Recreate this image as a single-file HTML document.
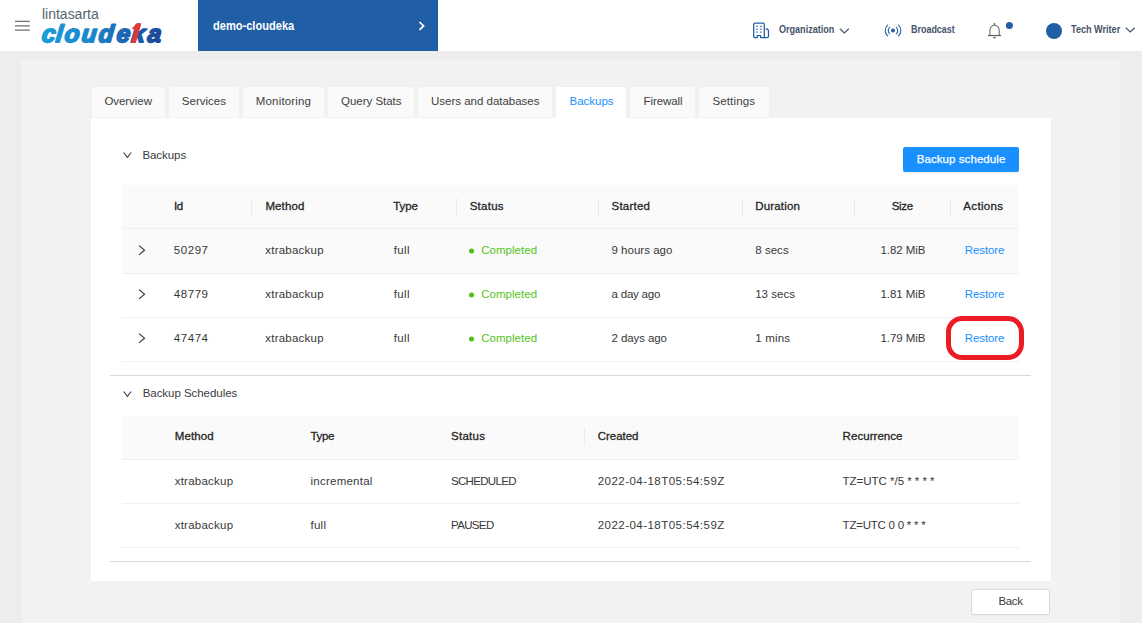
<!DOCTYPE html>
<html lang="en">
<head>
<meta charset="utf-8">
<title>Backups - demo-cloudeka</title>
<style>
*{box-sizing:border-box;margin:0;padding:0}
html,body{width:1142px;height:623px;overflow:hidden}
body{background:#ededed;font-family:"Liberation Sans",sans-serif;position:relative}
.abs,.t{position:absolute}
.t{white-space:pre;line-height:1;transform-origin:0 50%}
#hdr{left:0;top:0;width:1142px;height:51px;background:#fff}
#inner{left:21px;top:60px;width:1099px;height:563px;background:#f2f2f2}
#proj{left:198px;top:0;width:240px;height:51px;background:#205ea6}
.tab{top:87px;height:30px;background:#fafafa;box-shadow:0 0 0 1px #f0f0f0}
.tab.act{background:#fff;height:31px;box-shadow:-1px -1px 0 #f0f0f0,1px -1px 0 #f0f0f0}
#card{left:91px;top:118px;width:960px;height:463px;background:#fff}
.th{background:#fafafa}
.hl{height:1px;background:#f0f0f0}
.vd{width:1px;height:18px;background:#ebebeb}
.dv{height:1px;background:#d9d9d9}
#bs{left:903px;top:147px;width:116px;height:25px;background:#1890ff;border-radius:2px;box-shadow:0 2px 0 rgba(0,0,0,.045)}
#back{left:971px;top:589px;width:79px;height:26px;box-shadow:0 2px 0 rgba(0,0,0,.015);background:#fff;border:1px solid #d9d9d9;border-radius:2px}
.dot{width:6px;height:6px;border-radius:50%;background:#52c41a}
svg{position:absolute;overflow:visible}
</style>
</head>
<body>
<div class="abs" id="hdr"></div>
<div class="abs" id="inner"></div>
<div class="abs" id="proj"></div>

<!-- hamburger -->
<svg style="left:0;top:0" width="60" height="51" viewBox="0 0 60 51"><path d="M15 21.4 H29.8 M15 25.9 H29.8 M15 30.2 H29.8" fill="none" stroke="#707070" stroke-width="1.3"/></svg>
<svg style="left:0;top:0" width="200" height="51" viewBox="0 0 200 51">
<defs><linearGradient id="lg" gradientUnits="userSpaceOnUse" x1="42.0" y1="0" x2="162.0" y2="0"><stop offset="0" stop-color="#1b9cd8"/><stop offset="0.4" stop-color="#1b86cc"/><stop offset="0.7" stop-color="#1c65b2"/><stop offset="1" stop-color="#1d4796"/></linearGradient></defs>
<text id="logo" transform="translate(0 41.7) skewX(-6) scale(1.0 1)" x="41.30 55.20 64.00 81.00 98.00 116.00 130.80 146.90" y="0" font-family="Liberation Sans, sans-serif" font-size="24.4" font-weight="bold" font-style="italic" fill="url(#lg)" stroke="url(#lg)" stroke-width="1.8" stroke-linejoin="round">cloudeka</text>
<path d="M137.1 23.2 H141.2 L135.8 43 H131.1 L135.3 29 L132.2 29.2 L131.9 28.4 Z" fill="#e8352e"/>
</svg>

<!-- project chevron -->
<svg style="left:418px;top:21px" width="8" height="10" viewBox="0 0 8 10"><path d="M1.5 1 L5.6 4.9 L1.5 8.8" fill="none" stroke="#fff" stroke-width="1.7"/></svg>

<!-- organization icon -->
<svg style="left:746px;top:16px" width="30" height="28" viewBox="746 16 30 28" fill="none" stroke="#205ea6" stroke-width="1.25" stroke-linecap="round" stroke-linejoin="round">
<path d="M753.7 36.2 V24.4 Q753.7 23.1 755 23.1 H763 Q764.3 23.1 764.3 24.4 V37.3"/>
<path d="M753.7 36.2 Q753.7 37.5 755 37.5 H757.2 V35.6 H760.6 V37.5 H767.2 Q768.5 37.5 768.5 36.2 V31.2 Q768.5 29.2 766.2 28.9"/>
<path d="M756.3 26.3 H757.7 M760.3 26.3 H761.7 M756.3 29.2 H757.7 M760.3 29.2 H761.7 M756.3 32.2 H757.7 M760.3 32.2 H761.7" stroke-linecap="butt" stroke-width="1.2"/>
</svg>
<!-- chevron down org -->
<svg style="left:839px;top:28px" width="11" height="6" viewBox="0 0 11 6"><path d="M0.8 0.8 L5.3 5 L9.8 0.8" fill="none" stroke="#46536a" stroke-width="1.2"/></svg>

<!-- broadcast icon -->
<svg style="left:878px;top:16px" width="30" height="28" viewBox="878 16 30 28" fill="none" stroke="#205ea6" stroke-width="1.1" stroke-linecap="round">
<circle cx="893" cy="30.5" r="2" fill="#205ea6" stroke="none"/>
<path d="M889.6 27.3 A4.5 4.5 0 0 0 889.6 33.7"/>
<path d="M896.4 27.3 A4.5 4.5 0 0 1 896.4 33.7"/>
<path d="M887.7 25.2 A6.9 6.9 0 0 0 887.7 35.8"/>
<path d="M898.4 25.2 A6.9 6.9 0 0 1 898.4 35.8"/>
</svg>

<!-- bell -->
<svg style="left:982px;top:16px" width="36" height="28" viewBox="982 16 36 28" fill="none" stroke="#666" stroke-width="1.05">
<path d="M994.5 23 V25" stroke-width="1.4"/>
<path d="M989.9 35.2 V29.9 A4.65 4.65 0 0 1 999.2 29.9 V35.2"/>
<path d="M988.1 35.55 H1001.1" stroke="#5c5c5c" stroke-width="1.2"/>
<path d="M992.9 36.9 H996.1 L994.5 38.9 Z" fill="#666" stroke="none"/>
<circle cx="1009.4" cy="25.4" r="3.5" fill="#205ea6" stroke="none"/>
</svg>
<!-- avatar -->
<div class="abs" style="left:1046.3px;top:22.7px;width:16px;height:16px;border-radius:50%;background:#205ea6"></div>
<svg style="left:1124.6px;top:27.1px" width="11" height="6" viewBox="0 0 11 6"><path d="M0.8 0.8 L5.3 5 L9.8 0.8" fill="none" stroke="#46536a" stroke-width="1.2"/></svg>

<!-- tabs -->
<div class="abs tab" style="left:92px;width:73px"></div>
<div class="abs tab" style="left:169px;width:70px"></div>
<div class="abs tab" style="left:243px;width:81px"></div>
<div class="abs tab" style="left:328px;width:86px"></div>
<div class="abs tab" style="left:418px;width:134px"></div>
<div class="abs tab act" style="left:556px;width:70px"></div>
<div class="abs tab" style="left:630px;width:65px"></div>
<div class="abs tab" style="left:699px;width:70px"></div>

<div class="abs" id="card"></div>

<!-- collapse arrows -->
<svg style="left:122.5px;top:152px" width="9" height="6" viewBox="0 0 9 6"><path d="M0.6 0.5 L4.4 5.3 L8.2 0.5" fill="none" stroke="#333" stroke-width="1.05"/></svg>
<svg style="left:122.5px;top:390.5px" width="9" height="6" viewBox="0 0 9 6"><path d="M0.6 0.5 L4.4 5.3 L8.2 0.5" fill="none" stroke="#333" stroke-width="1.05"/></svg>

<div class="abs" id="bs"></div>

<!-- table 1 -->
<div class="abs th" style="left:122px;top:185px;width:897px;height:43px"></div>
<div class="abs" style="left:122px;top:229px;width:897px;height:44px;background:#fafafa"></div>
<div class="abs hl" style="left:122px;top:228px;width:897px"></div>
<div class="abs hl" style="left:122px;top:273px;width:897px"></div>
<div class="abs hl" style="left:122px;top:317px;width:897px"></div>
<div class="abs hl" style="left:122px;top:361px;width:897px"></div>
<div class="abs vd" style="left:251px;top:198px"></div>
<div class="abs vd" style="left:456px;top:198px"></div>
<div class="abs vd" style="left:598px;top:198px"></div>
<div class="abs vd" style="left:742px;top:198px"></div>
<div class="abs vd" style="left:854px;top:198px"></div>
<div class="abs vd" style="left:950px;top:198px"></div>

<!-- row expanders -->
<svg style="left:138px;top:245px" width="8" height="11" viewBox="0 0 8 11"><path d="M1 0.6 L6.6 5.2 L1 9.8" fill="none" stroke="#333" stroke-width="1.1"/></svg>
<svg style="left:138px;top:289px" width="8" height="11" viewBox="0 0 8 11"><path d="M1 0.6 L6.6 5.2 L1 9.8" fill="none" stroke="#333" stroke-width="1.1"/></svg>
<svg style="left:138px;top:333px" width="8" height="11" viewBox="0 0 8 11"><path d="M1 0.6 L6.6 5.2 L1 9.8" fill="none" stroke="#333" stroke-width="1.1"/></svg>

<svg style="left:460px;top:240px" width="24" height="110" viewBox="460 240 24 110"><circle cx="471.5" cy="251" r="2.5" fill="#4cc016"/><circle cx="471.5" cy="295" r="2.5" fill="#4cc016"/><circle cx="471.5" cy="339" r="2.5" fill="#4cc016"/></svg>

<!-- highlight -->
<div class="abs" style="left:946px;top:316px;width:78px;height:44px;border:5px solid #ec1c24;border-radius:16px"></div>

<div class="abs dv" style="left:110px;top:375px;width:921px"></div>

<!-- table 2 -->
<div class="abs th" style="left:122px;top:416px;width:897px;height:43px"></div>
<div class="abs hl" style="left:122px;top:459px;width:897px"></div>
<div class="abs hl" style="left:122px;top:503px;width:897px"></div>
<div class="abs hl" style="left:122px;top:547px;width:897px"></div>
<div class="abs vd" style="left:584px;top:428px"></div>
<div class="abs dv" style="left:110px;top:561px;width:921px"></div>

<div class="abs" id="back"></div>

<span class="t" style="left:104.4px;top:96px;font-size:11.5px;color:#404040;letter-spacing:-0.048px;">Overview</span>
<span class="t" style="left:181.8px;top:96px;font-size:11.5px;color:#404040;letter-spacing:0.013px;">Services</span>
<span class="t" style="left:255.8px;top:96px;font-size:11.5px;color:#404040;letter-spacing:0.166px;">Monitoring</span>
<span class="t" style="left:341.0px;top:96px;font-size:11.5px;color:#404040;letter-spacing:-0.022px;">Query Stats</span>
<span class="t" style="left:431.0px;top:96px;font-size:11.5px;color:#404040;letter-spacing:-0.010px;">Users and databases</span>
<span class="t" style="left:643.6px;top:96px;font-size:11.5px;color:#404040;letter-spacing:-0.104px;">Firewall</span>
<span class="t" style="left:712.4px;top:96px;font-size:11.5px;color:#404040;letter-spacing:0.148px;">Settings</span>
<span class="t" style="left:569.6px;top:96px;font-size:11.5px;color:#1890ff;letter-spacing:-0.035px;">Backups</span>
<span class="t" style="left:142.4px;top:150px;font-size:11.5px;color:#3a3a3a;letter-spacing:-0.052px;">Backups</span>
<span class="t" style="left:142.7px;top:388px;font-size:11.5px;color:#3a3a3a;letter-spacing:-0.044px;">Backup Schedules</span>
<span class="t" style="left:916.8px;top:154px;font-size:11.5px;color:#fff;-webkit-text-stroke:0.25px #fff;letter-spacing:0.065px;">Backup schedule</span>
<span class="t" style="left:173.9px;top:201px;font-size:11.5px;color:#262626;-webkit-text-stroke:0.3px #262626;letter-spacing:-0.294px;">Id</span>
<span class="t" style="left:265.4px;top:201px;font-size:11.5px;color:#262626;-webkit-text-stroke:0.3px #262626;letter-spacing:0.108px;">Method</span>
<span class="t" style="left:393.3px;top:201px;font-size:11.5px;color:#262626;-webkit-text-stroke:0.3px #262626;letter-spacing:-0.079px;">Type</span>
<span class="t" style="left:469.7px;top:201px;font-size:11.5px;color:#262626;-webkit-text-stroke:0.3px #262626;letter-spacing:0.258px;">Status</span>
<span class="t" style="left:611.5px;top:201px;font-size:11.5px;color:#262626;-webkit-text-stroke:0.3px #262626;letter-spacing:0.237px;">Started</span>
<span class="t" style="left:755.2px;top:201px;font-size:11.5px;color:#262626;-webkit-text-stroke:0.3px #262626;letter-spacing:0.190px;">Duration</span>
<span class="t" style="left:891.7px;top:201px;font-size:11.5px;color:#262626;-webkit-text-stroke:0.3px #262626;letter-spacing:-0.292px;">Size</span>
<span class="t" style="left:963.3px;top:201px;font-size:11.5px;color:#262626;-webkit-text-stroke:0.3px #262626;letter-spacing:0.330px;">Actions</span>
<span class="t" style="left:173.8px;top:245px;font-size:11.5px;color:#383838;letter-spacing:0.554px;">50297</span>
<span class="t" style="left:265.3px;top:245px;font-size:11.5px;color:#383838;letter-spacing:0.226px;">xtrabackup</span>
<span class="t" style="left:393.7px;top:245px;font-size:11.5px;color:#383838;letter-spacing:0.366px;">full</span>
<span class="t" style="left:481.2px;top:245px;font-size:11.5px;color:#52c41a;letter-spacing:0.034px;">Completed</span>
<span class="t" style="left:611.5px;top:245px;font-size:11.5px;color:#383838;letter-spacing:0.015px;">9 hours ago</span>
<span class="t" style="left:755.2px;top:245px;font-size:11.5px;color:#383838;letter-spacing:0.050px;">8 secs</span>
<span class="t" style="left:880.5px;top:245px;font-size:11.5px;color:#383838;letter-spacing:-0.056px;">1.82 MiB</span>
<span class="t" style="left:964.8px;top:245px;font-size:11.5px;color:#1890ff;letter-spacing:-0.097px;">Restore</span>
<span class="t" style="left:173.8px;top:289px;font-size:11.5px;color:#383838;letter-spacing:0.554px;">48779</span>
<span class="t" style="left:265.3px;top:289px;font-size:11.5px;color:#383838;letter-spacing:0.226px;">xtrabackup</span>
<span class="t" style="left:393.7px;top:289px;font-size:11.5px;color:#383838;letter-spacing:0.366px;">full</span>
<span class="t" style="left:481.2px;top:289px;font-size:11.5px;color:#52c41a;letter-spacing:0.034px;">Completed</span>
<span class="t" style="left:611.5px;top:289px;font-size:11.5px;color:#383838;letter-spacing:-0.202px;">a day ago</span>
<span class="t" style="left:755.2px;top:289px;font-size:11.5px;color:#383838;letter-spacing:0.027px;">13 secs</span>
<span class="t" style="left:880.5px;top:289px;font-size:11.5px;color:#383838;letter-spacing:-0.056px;">1.81 MiB</span>
<span class="t" style="left:964.8px;top:289px;font-size:11.5px;color:#1890ff;letter-spacing:-0.097px;">Restore</span>
<span class="t" style="left:173.8px;top:333px;font-size:11.5px;color:#383838;letter-spacing:0.554px;">47474</span>
<span class="t" style="left:265.3px;top:333px;font-size:11.5px;color:#383838;letter-spacing:0.226px;">xtrabackup</span>
<span class="t" style="left:393.7px;top:333px;font-size:11.5px;color:#383838;letter-spacing:0.366px;">full</span>
<span class="t" style="left:481.2px;top:333px;font-size:11.5px;color:#52c41a;letter-spacing:0.034px;">Completed</span>
<span class="t" style="left:611.5px;top:333px;font-size:11.5px;color:#383838;letter-spacing:-0.085px;">2 days ago</span>
<span class="t" style="left:755.2px;top:333px;font-size:11.5px;color:#383838;letter-spacing:0.185px;">1 mins</span>
<span class="t" style="left:880.5px;top:333px;font-size:11.5px;color:#383838;letter-spacing:-0.056px;">1.79 MiB</span>
<span class="t" style="left:964.8px;top:333px;font-size:11.5px;color:#1890ff;letter-spacing:-0.097px;">Restore</span>
<span class="t" style="left:174.7px;top:431px;font-size:11.5px;color:#262626;-webkit-text-stroke:0.3px #262626;letter-spacing:0.108px;">Method</span>
<span class="t" style="left:310.5px;top:431px;font-size:11.5px;color:#262626;-webkit-text-stroke:0.3px #262626;letter-spacing:-0.312px;">Type</span>
<span class="t" style="left:451.0px;top:431px;font-size:11.5px;color:#262626;-webkit-text-stroke:0.3px #262626;letter-spacing:0.278px;">Status</span>
<span class="t" style="left:597.7px;top:431px;font-size:11.5px;color:#262626;-webkit-text-stroke:0.3px #262626;letter-spacing:-0.020px;">Created</span>
<span class="t" style="left:842.6px;top:431px;font-size:11.5px;color:#262626;-webkit-text-stroke:0.3px #262626;letter-spacing:0.050px;">Recurrence</span>
<span class="t" style="left:174.7px;top:476px;font-size:11.5px;color:#383838;letter-spacing:0.237px;">xtrabackup</span>
<span class="t" style="left:310.5px;top:476px;font-size:11.5px;color:#383838;letter-spacing:0.245px;">incremental</span>
<span class="t" style="left:451.0px;top:476px;font-size:11.5px;color:#383838;letter-spacing:-0.680px;">SCHEDULED</span>
<span class="t" style="left:597.7px;top:476px;font-size:11.5px;color:#383838;letter-spacing:0.472px;">2022-04-18T05:54:59Z</span>
<span class="t" style="left:842.6px;top:476px;font-size:11.5px;color:#383838;letter-spacing:-0.026px;">TZ=UTC */5 * * * *</span>
<span class="t" style="left:174.7px;top:520px;font-size:11.5px;color:#383838;letter-spacing:0.237px;">xtrabackup</span>
<span class="t" style="left:310.5px;top:520px;font-size:11.5px;color:#383838;letter-spacing:0.266px;">full</span>
<span class="t" style="left:451.0px;top:520px;font-size:11.5px;color:#383838;letter-spacing:-0.651px;">PAUSED</span>
<span class="t" style="left:597.7px;top:520px;font-size:11.5px;color:#383838;letter-spacing:0.472px;">2022-04-18T05:54:59Z</span>
<span class="t" style="left:842.6px;top:520px;font-size:11.5px;color:#383838;letter-spacing:-0.233px;">TZ=UTC 0 0 * * *</span>
<span class="t" style="left:998.4px;top:596px;font-size:11.5px;color:#3a3a3a;letter-spacing:-0.326px;">Back</span>
<span class="t" style="left:41.7px;top:6px;font-size:15.3px;color:#56646e;transform:scaleX(0.9134);">lintasarta</span>
<span class="t" style="left:212.8px;top:19px;font-size:13.5px;color:#fff;font-weight:bold;transform:scaleX(0.8199);">demo-cloudeka</span>
<span class="t" style="left:778.7px;top:24px;font-size:11.5px;color:#46536a;font-weight:bold;transform:scaleX(0.7868);">Organization</span>
<span class="t" style="left:911.2px;top:24px;font-size:11.5px;color:#46536a;font-weight:bold;transform:scaleX(0.7787);">Broadcast</span>
<span class="t" style="left:1070.6px;top:24px;font-size:11.5px;color:#46536a;font-weight:bold;transform:scaleX(0.7910);">Tech Writer</span>
</body>
</html>
